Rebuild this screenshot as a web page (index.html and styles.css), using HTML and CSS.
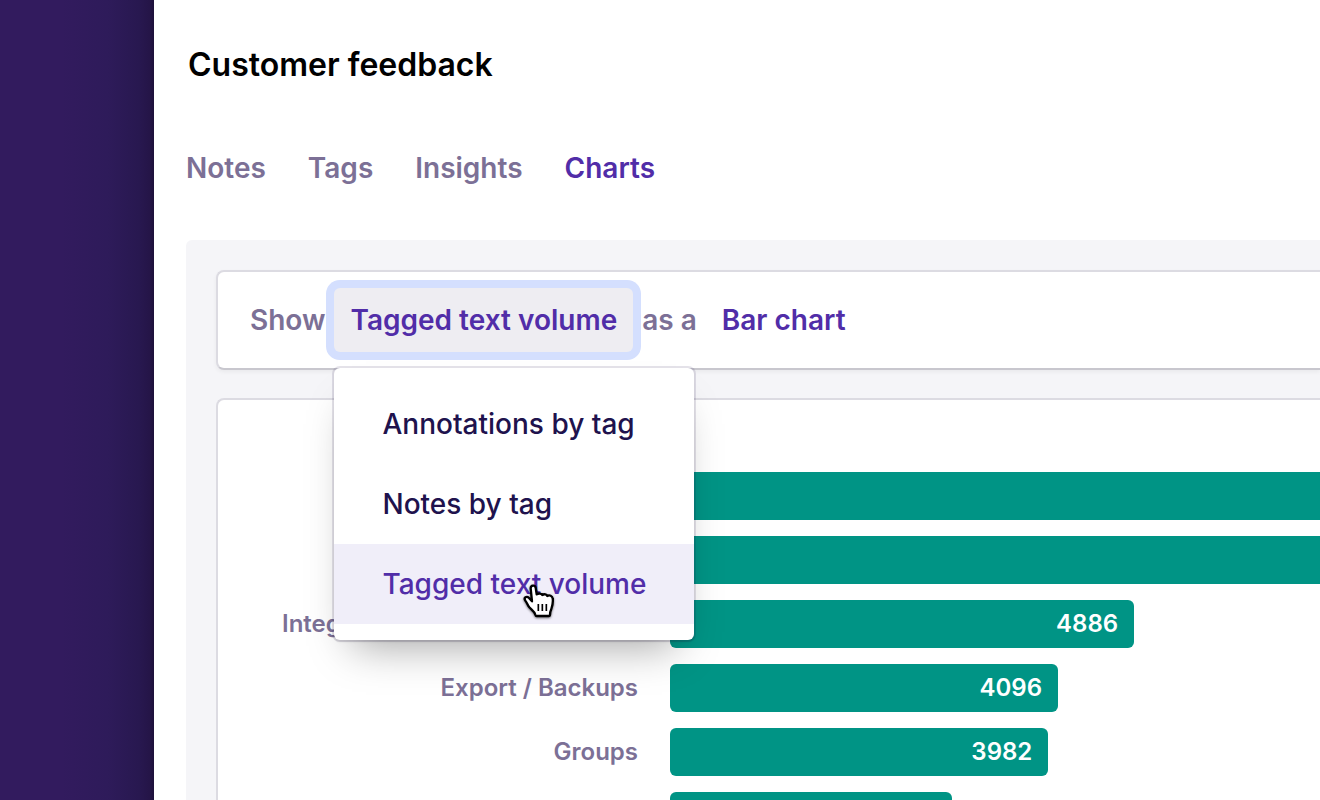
FILE: index.html
```html
<!DOCTYPE html>
<html lang="en">
<head>
<meta charset="utf-8">
<title>Customer feedback</title>
<link rel="stylesheet" href="styles.css">
</head>
<body>
<div class="app">
  <aside class="sidebar"></aside>
  <main class="main">
    <h1 class="title">Customer feedback</h1>
    <nav class="tabs">
      <a class="tab" href="#notes">Notes</a>
      <a class="tab" href="#tags">Tags</a>
      <a class="tab" href="#insights">Insights</a>
      <a class="tab tab-active" href="#charts">Charts</a>
    </nav>
    <section class="panel">
      <div class="card toolbar">
        <span>Show</span>
        <div class="picker">
          <button class="picker-button picker-open" type="button" aria-haspopup="menu" aria-expanded="true">Tagged text volume</button>
          <div class="menu" role="menu">
            <button class="menu-item" type="button" role="menuitem">Annotations by tag</button>
            <button class="menu-item" type="button" role="menuitem">Notes by tag</button>
            <button class="menu-item menu-item-active" type="button" role="menuitem">Tagged text volume</button>
            <svg class="pointer" viewBox="64 62 108 120" aria-hidden="true">
              <path class="hand" d="M93 81C93 71 106 70 108 79L111 99C116 95 126 96 128 101C133 97 141 99 143 104C149 100 158 104 159 111C161 122 158 134 155 143C152 149 151 154 151 161Q151 164 148 164H111Q108 164 107 160C105 151 96 146 89 138C84 132 83 126 77 118C71 109 81 103 88 110L97 120Z"/>
              <path class="creases" d="M116 128V149M128 128V149M140 128V149"/>
            </svg>
          </div>
        </div>
        <span>as a</span>
        <button class="picker-button" type="button">Bar chart</button>
      </div>
      <div class="card chart">
        <span class="label"></span><div class="track"><div class="bar bar-long" style="width:100%"></div></div>
        <span class="label"></span><div class="track"><div class="bar bar-long" style="width:100%"></div></div>
        <span class="label">Integrations &amp; Connected apps</span><div class="track"><div class="bar" style="width:71.4%">4886</div></div>
        <span class="label">Export / Backups</span><div class="track"><div class="bar" style="width:59.7%">4096</div></div>
        <span class="label">Groups</span><div class="track"><div class="bar" style="width:58.2%">3982</div></div>
        <span class="label"></span><div class="track"><div class="bar" style="width:43.4%"></div></div>
      </div>
    </section>
  </main>
</div>
</body>
</html>
```
FILE: styles.css
```css
* { box-sizing: border-box; }

body {
  margin: 0;
  background: #fff;
  font-family: Inter, "Liberation Sans", sans-serif;
  font-optical-sizing: none;
  font-size: 28px;
  font-weight: 500;
  line-height: 40px;
  color: #7c7096;
}

button {
  border: 0;
  background: none;
  font: inherit;
  text-align: left;
  white-space: nowrap;
}

.app {
  display: flex;
  height: 100vh;
  overflow: hidden;
}

.sidebar {
  flex: 0 0 154px;
  background: linear-gradient(90deg, #321b5e 0, #321b5e 40%, #2e1b5a 70%, #281850 90%, #251548 97%, #1d103a 100%);
}

.main {
  flex: 1;
  min-width: 0;
  padding: 45px 0 0 32px;
}

.title {
  margin: 0 0 63px 2px;
  color: #000;
  font-size: 32px;
  font-weight: 600;
  line-height: 40px;
}

.tabs {
  display: flex;
  gap: 42px;
  margin-bottom: 52px;
}

.tab {
  color: inherit;
  font-weight: 600;
  text-decoration: none;
}

.tab-active { color: #512da8; }

.panel {
  display: flex;
  flex-direction: column;
  gap: 28px;
  padding: 30px 0 0 30px;
  border-radius: 6px 0 0 0;
  background: #f5f5f8;
}

.card {
  border: 2px solid #dcdbe2;
  border-right: 0;
  border-radius: 8px 0 0 8px;
  background: #fff;
}

.toolbar {
  display: flex;
  align-items: center;
  gap: 9px;
  padding: 16px 32px;
  border-bottom-color: #c8c7ce;
  box-shadow: 0 2px 4px rgba(0, 0, 0, 0.05);
  font-weight: 600;
  white-space: nowrap;
}

.picker { position: relative; }

.picker-button {
  padding: 12px 16px;
  border-radius: 6px;
  color: #512da8;
}

.picker-open {
  display: block;
  background: #eeedf2;
  box-shadow: 0 0 0 8px #d4dffe;
}

.menu {
  position: absolute;
  z-index: 1;
  top: calc(100% + 16px);
  left: 0;
  width: 360px;
  padding: 16px 0;
  border-radius: 6px;
  background: #fff;
  box-shadow: 0 0 0 2px rgba(35, 20, 75, 0.12), 0 2px 2px rgba(0, 0, 0, 0.1), 0 24px 40px -18px rgba(0, 0, 0, 0.36);
}

.menu-item {
  display: block;
  width: 100%;
  padding: 20px 48px;
  color: #20124d;
  font-weight: 500;
}

.menu-item-active {
  background: #f0eef9;
  color: #512da8;
}

.pointer {
  position: absolute;
  left: 187px;
  bottom: 18px;
  width: 36px;
  height: 40px;
  filter: drop-shadow(0 1px 1px rgba(0, 0, 0, 0.5));
}

.hand {
  fill: #fff;
  stroke: #000;
  stroke-width: 7;
  stroke-linejoin: round;
}

.creases {
  fill: none;
  stroke: #000;
  stroke-width: 5;
}

.chart {
  display: grid;
  grid-template-columns: 356px 1fr;
  grid-auto-rows: 48px;
  gap: 16px 32px;
  align-items: center;
  padding: 72px 0 32px 64px;
  font-size: 24px;
  font-weight: 600;
}

.label {
  text-align: right;
  white-space: nowrap;
}

.bar {
  height: 48px;
  padding: 4px 16px;
  border-radius: 6px;
  background: #009485;
  color: #fff;
  text-align: right;
}

.bar-long { border-radius: 6px 0 0 6px; }
```
